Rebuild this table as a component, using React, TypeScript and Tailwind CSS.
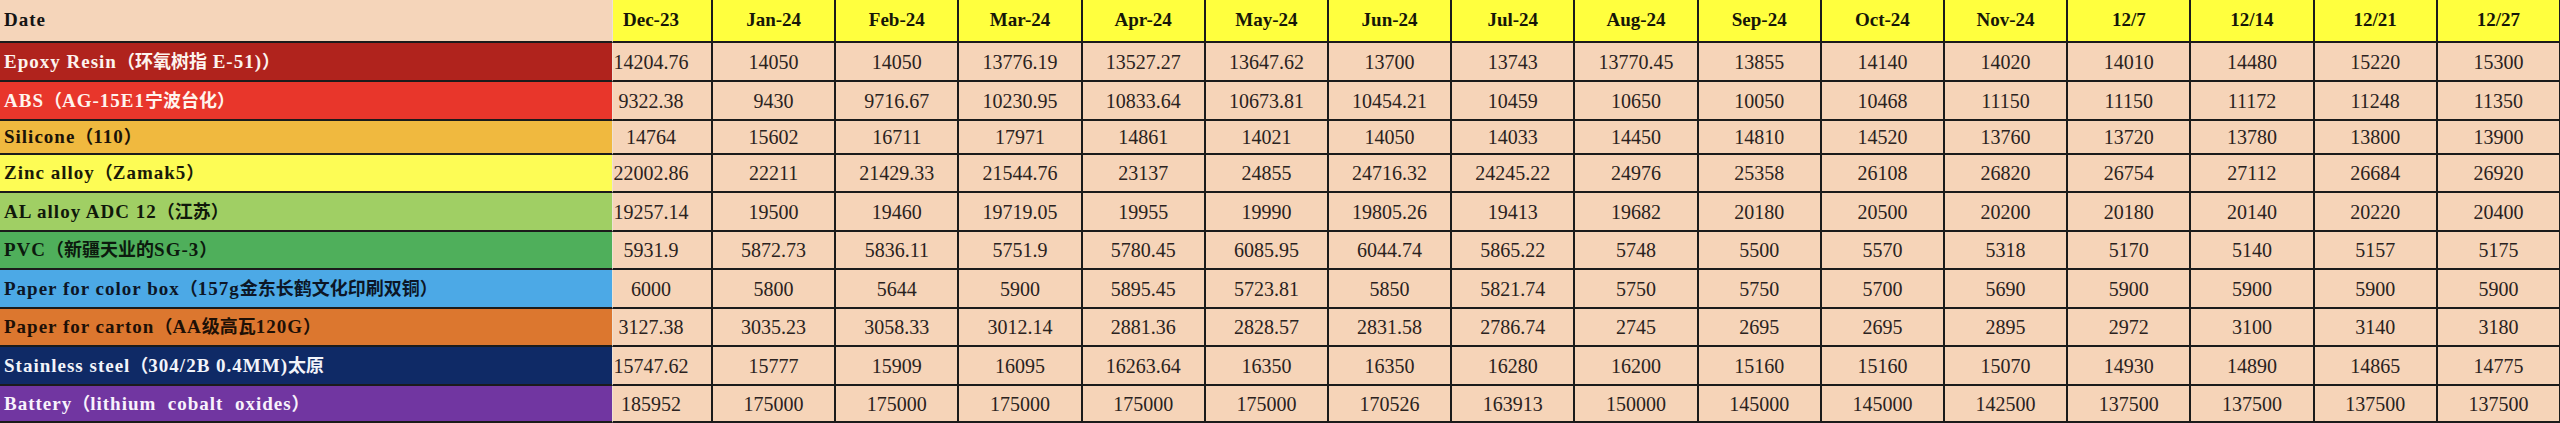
const months = [
  "Dec-23", "Jan-24", "Feb-24", "Mar-24", "Apr-24", "May-24", "Jun-24", "Jul-24",
  "Aug-24", "Sep-24", "Oct-24", "Nov-24", "12/7", "12/14", "12/21", "12/27",
];

interface Row {
  label: string;
  cls: string; // background + text colour of the label cell
  h: string; // row height
  values: string[];
}

const rows: Row[] = [
  {
    label: "Epoxy Resin（环氧树指 E-51)）",
    cls: "bg-[#b0231d] text-[#fdf3ee]",
    h: "h-[39px]",
    values: "14204.76 14050 14050 13776.19 13527.27 13647.62 13700 13743 13770.45 13855 14140 14020 14010 14480 15220 15300".split(" "),
  },
  {
    label: "ABS（AG-15E1宁波台化）",
    cls: "bg-[#e8362b] text-[#fff4ee]",
    h: "h-[39px]",
    values: "9322.38 9430 9716.67 10230.95 10833.64 10673.81 10454.21 10459 10650 10050 10468 11150 11150 11172 11248 11350".split(" "),
  },
  {
    label: "Silicone（110）",
    cls: "bg-[#f0b93f] text-[#1a1208]",
    h: "h-[34px]",
    values: "14764 15602 16711 17971 14861 14021 14050 14033 14450 14810 14520 13760 13720 13780 13800 13900".split(" "),
  },
  {
    label: "Zinc alloy（Zamak5）",
    cls: "bg-[#fdfc55] text-[#1a1a08]",
    h: "h-[38px]",
    values: "22002.86 22211 21429.33 21544.76 23137 24855 24716.32 24245.22 24976 25358 26108 26820 26754 27112 26684 26920".split(" "),
  },
  {
    label: "AL alloy ADC 12（江苏）",
    cls: "bg-[#a0cf64] text-[#10180a]",
    h: "h-[39px]",
    values: "19257.14 19500 19460 19719.05 19955 19990 19805.26 19413 19682 20180 20500 20200 20180 20140 20220 20400".split(" "),
  },
  {
    label: "PVC（新疆天业的SG-3）",
    cls: "bg-[#4faf5b] text-[#0c1a0e]",
    h: "h-[38px]",
    values: "5931.9 5872.73 5836.11 5751.9 5780.45 6085.95 6044.74 5865.22 5748 5500 5570 5318 5170 5140 5157 5175".split(" "),
  },
  {
    label: "Paper for color box（157g金东长鹤文化印刷双铜）",
    cls: "bg-[#4ca9e6] text-[#0c1626]",
    h: "h-[39px]",
    values: "6000 5800 5644 5900 5895.45 5723.81 5850 5821.74 5750 5750 5700 5690 5900 5900 5900 5900".split(" "),
  },
  {
    label: "Paper for carton（AA级高瓦120G）",
    cls: "bg-[#dc772f] text-[#1e1006]",
    h: "h-[38px]",
    values: "3127.38 3035.23 3058.33 3012.14 2881.36 2828.57 2831.58 2786.74 2745 2695 2695 2895 2972 3100 3140 3180".split(" "),
  },
  {
    label: "Stainless steel（304/2B 0.4MM)太原",
    cls: "bg-[#0f2a66] text-[#f2f4fa]",
    h: "h-[39px]",
    values: "15747.62 15777 15909 16095 16263.64 16350 16350 16280 16200 15160 15160 15070 14930 14890 14865 14775".split(" "),
  },
  {
    label: "Battery（lithium  cobalt  oxides）",
    cls: "bg-[#7136a1] text-[#f8f2fc]",
    h: "h-[37px]",
    values: "185952 175000 175000 175000 175000 175000 170526 163913 150000 145000 145000 142500 137500 137500 137500 137500".split(" "),
  },
];

// latin parts in serif, CJK runs in the CJK font at their own size
function Label({ text }: { text: string }) {
  const parts = text.split(/([\u3000-\u303f\u4e00-\u9fff\uff00-\uffef]+)/);
  return (
    <span className="whitespace-pre">
      {parts.map((p, i) =>
        i % 2 === 1 ? (
          <span key={i} className="font-['Noto_Sans_CJK_SC',sans-serif] text-[18px] tracking-normal">
            {p}
          </span>
        ) : (
          <span key={i}>{p}</span>
        )
      )}
    </span>
  );
}

const labelCell =
  "flex items-center pl-[4px] border-b-2 border-r border-b-[#1b1b1b] border-r-[#efe2d3] font-['Liberation_Serif','Noto_Sans_CJK_SC',serif] font-bold text-[19px] tracking-[1px] overflow-hidden";
const dataCell =
  "flex items-center justify-center border-b-2 border-r-2 border-[#1b1b1b] bg-[#f6d4b8] text-[#2a2220] font-['Liberation_Serif',serif] text-[20px] whitespace-nowrap";

export default function App() {
  return (
    <div className="w-[2560px] h-[423px] overflow-hidden bg-[#f6d4b8]">
      <div className="grid grid-cols-[613px_100px_repeat(15,1fr)] w-[2561px]">
        {/* header */}
        <div className={`${labelCell} h-[43px] bg-[#f5d5ba] text-[#141414]`}>Date</div>
        {months.map((m, i) => (
          <div
            key={m}
            className={`h-[43px] flex items-center justify-center border-b-2 border-r-2 border-[#1b1b1b] bg-[#ffff3e] text-[#161608] font-['Liberation_Serif',serif] font-bold text-[19px] ${
              i === 0 ? "pr-[22px]" : ""
            }`}
          >
            {m}
          </div>
        ))}

        {rows.map((r) => (
          <div key={r.label} className="contents">
            <div className={`${labelCell} ${r.h} ${r.cls}`}>
              <Label text={r.label} />
            </div>
            {r.values.map((v, i) => (
              <div key={i} className={`${dataCell} ${r.h} ${i === 0 ? "pr-[22px]" : ""}`}>
                {v}
              </div>
            ))}
          </div>
        ))}
      </div>
    </div>
  );
}
